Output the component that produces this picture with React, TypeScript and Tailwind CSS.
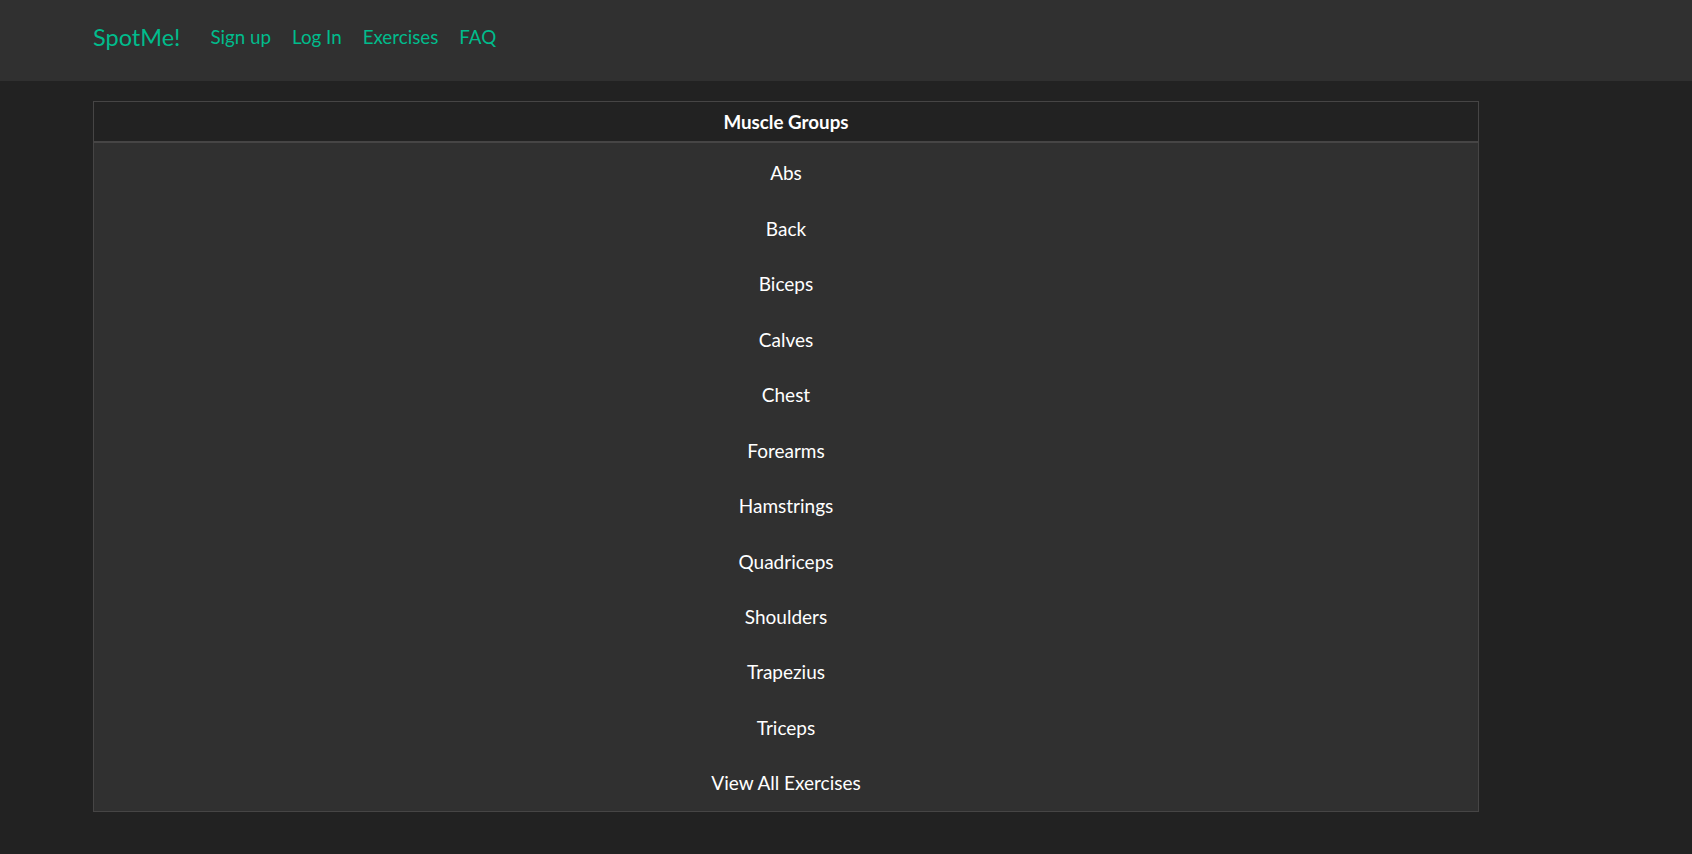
import React from "react";

const groups = [
  "Abs",
  "Back",
  "Biceps",
  "Calves",
  "Chest",
  "Forearms",
  "Hamstrings",
  "Quadriceps",
  "Shoulders",
  "Trapezius",
  "Triceps",
  "View All Exercises",
];

const App: React.FC = () => {
  return (
    <div
      className="min-h-screen bg-[#222222] text-white"
      style={{ fontFamily: "Lato, 'Liberation Sans', sans-serif" }}
    >
      {/* Navbar */}
      <nav className="h-[81px] bg-[#303030] flex items-center pb-[6px] pl-[93px]">
        <a className="text-[23.5px] text-[#00bc8c] mr-[30px] leading-none">SpotMe!</a>
        <div className="flex items-center gap-[21px] text-[18.75px] text-[#00bc8c] leading-none">
          <a>Sign up</a>
          <a>Log In</a>
          <a>Exercises</a>
          <a>FAQ</a>
        </div>
      </nav>

      {/* Muscle groups table */}
      <div className="pt-[20px] pl-[93px]">
        <div className="w-[1386px] border border-[#464545]">
          <div className="h-[41px] pt-[2px] bg-[#222222] border-b-2 border-[#464545] flex items-center justify-center text-[18.75px] font-bold">
            Muscle Groups
          </div>
          <div className="bg-[#303030] pt-[3px]">
            {groups.map((g) => (
              <div
                key={g}
                className="h-[55.45px] flex items-center justify-center text-[19px]"
              >
                {g}
              </div>
            ))}
          </div>
        </div>
      </div>
    </div>
  );
};

export default App;
